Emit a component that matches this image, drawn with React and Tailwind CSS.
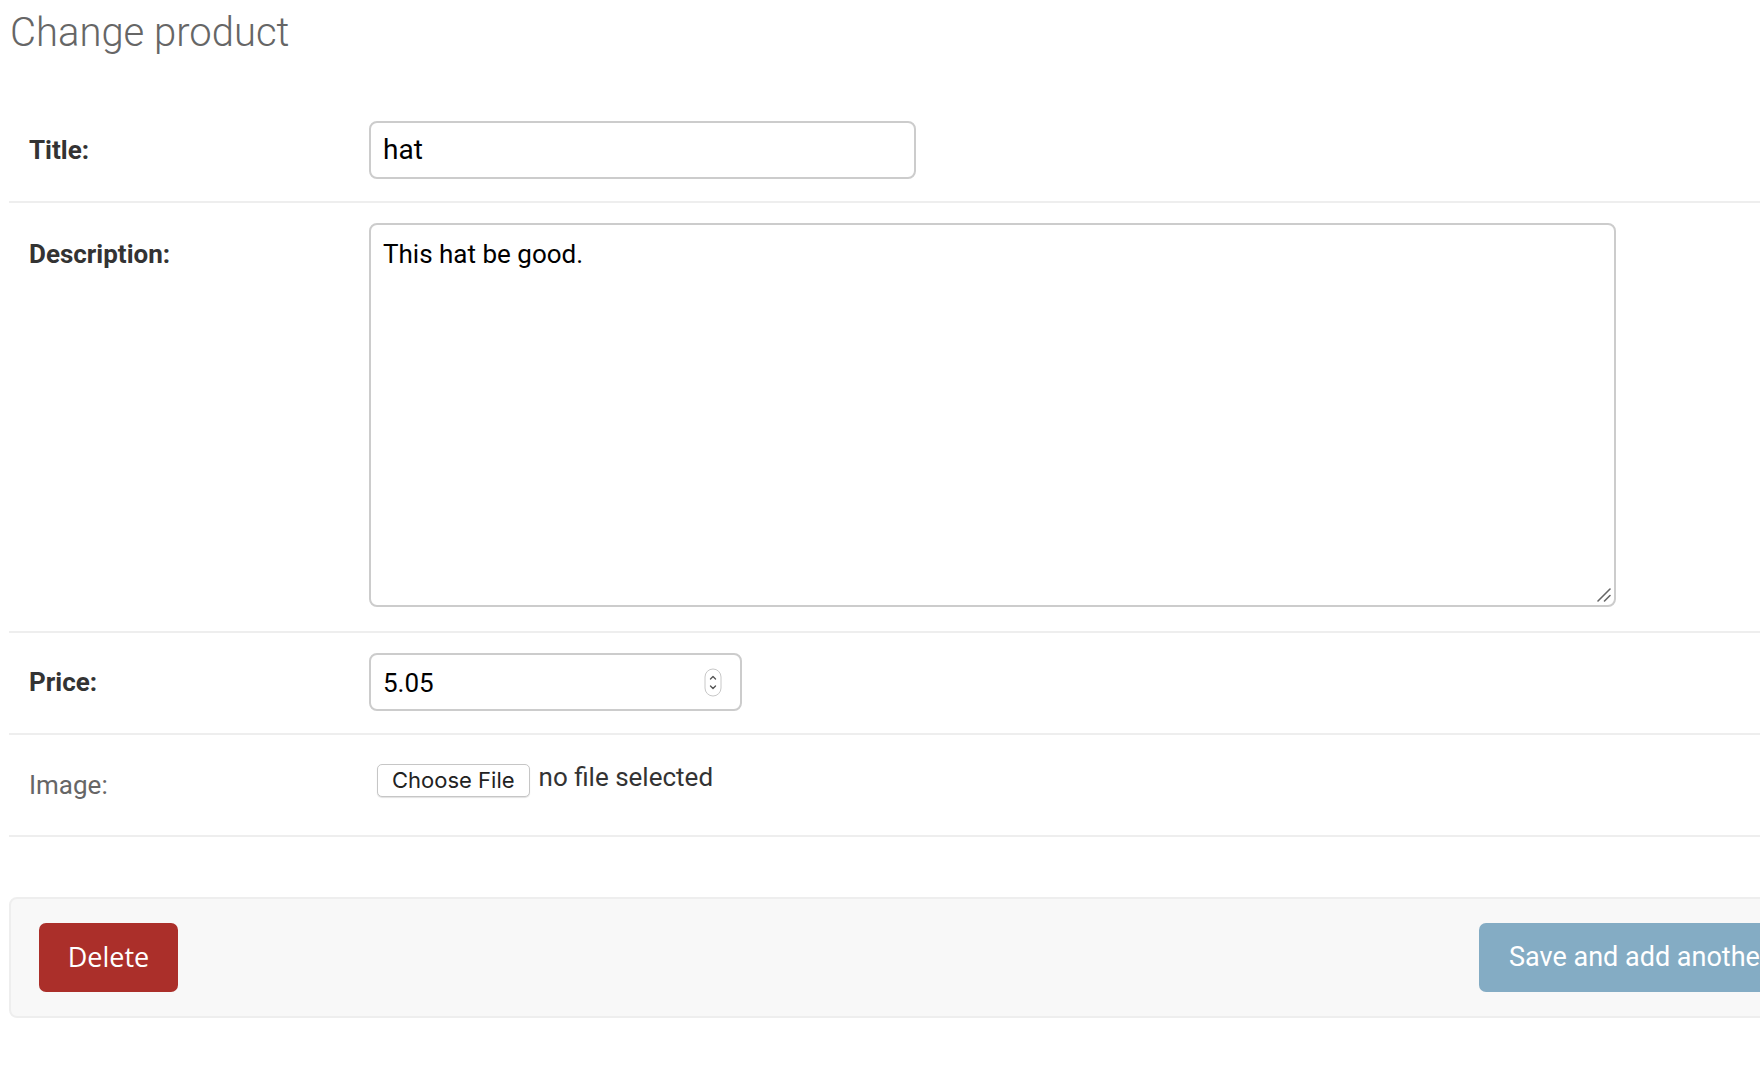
import React from "react";

const labelBold = "w-[340px] shrink-0 pt-[15px] leading-[28px] text-[26px] font-bold text-[#333]";

function Spinner() {
  return (
    <svg width="18" height="29" viewBox="0 0 18 29" className="shrink-0">
      <rect x="1" y="1" width="16" height="27" rx="8" fill="#fff" stroke="#c8c8c8" strokeWidth="1" />
      <path d="M6.5 11 L9 8.5 L11.5 11" fill="none" stroke="#555" strokeWidth="1.4" strokeLinecap="round" strokeLinejoin="round" />
      <path d="M6.5 18 L9 20.5 L11.5 18" fill="none" stroke="#555" strokeWidth="1.4" strokeLinecap="round" strokeLinejoin="round" />
    </svg>
  );
}

function FormRow({ children, bottom = "pb-[22px]" }) {
  return (
    <div className={"flex pl-[20px] pt-[20px] border-b-2 border-[#eee] " + bottom}>{children}</div>
  );
}

export default function App() {
  return (
    <div className="w-[1760px] h-[1088px] overflow-hidden bg-white font-['Roboto',sans-serif]">
      <div className="w-[2400px] pl-[9px]">
        <h1 className="pt-[13px] pl-[1px] text-[40px] leading-[40px] font-light text-[#666]">Change product</h1>

        <div className="mt-[48px]">
          <FormRow>
            <label className={labelBold}>Title:</label>
            <div className="w-[547px] h-[58px] flex items-center px-[12px] border-2 border-[#ccc] rounded-[8px] text-[28px] text-black">
              hat
            </div>
          </FormRow>

          <FormRow bottom="pb-[24px]">
            <label className={labelBold + " pt-[17px]"}>Description:</label>
            <div className="relative w-[1247px] h-[384px] px-[12px] pt-[13px] border-2 border-[#ccc] rounded-[8px] text-[26px] leading-[33px] text-black">
              This hat be good.
              <svg width="16" height="16" viewBox="0 0 16 16" className="absolute right-[2px] bottom-[2px]">
                <path d="M2 14 L14 2" stroke="#666" strokeWidth="1.6" strokeLinecap="round" />
                <path d="M8.5 14 L14 8.5" stroke="#666" strokeWidth="1.6" strokeLinecap="round" />
              </svg>
            </div>
          </FormRow>

          <FormRow>
            <label className={labelBold}>Price:</label>
            <div className="w-[373px] h-[58px] flex items-center justify-between pl-[12px] pr-[18px] border-2 border-[#ccc] rounded-[8px] text-[26px] text-black">
              <span className="pt-[2px]">5.05</span>
              <Spinner />
            </div>
          </FormRow>

          <FormRow>
            <label className="w-[340px] shrink-0 pt-[16px] leading-[28px] text-[26px] font-normal text-[#666]">Image:</label>
            <div className="h-[58px] flex items-start pt-[9px] pl-[8px]">
              <div className="h-[33px] px-[14px] flex items-center bg-white border border-[#c6c6c6] rounded-[5px] shadow-[0_1px_1px_rgba(0,0,0,0.12)] font-['Inter',sans-serif] text-[22px] text-[#222]">
                Choose File
              </div>
              <span className="ml-[9px] mt-[-5px] text-[26px] leading-[36px] text-[#333]">no file selected</span>
            </div>
          </FormRow>
        </div>

        <div className="mt-[60px] h-[121px] flex items-center pl-[28px] bg-[#f8f8f8] border-2 border-[#eee] rounded-[8px]">
          <div className="h-[69px] w-[139px] shrink-0 flex items-center justify-center bg-[#ab2f2a] rounded-[7px] font-['Open_Sans',sans-serif] font-medium text-[27px] text-white">
            Delete
          </div>
          <div className="ml-[1301px] flex shrink-0 gap-[10px]">
            <div className="h-[69px] shrink-0 whitespace-nowrap flex items-center px-[30px] bg-[#84acc4] rounded-[7px] text-[27px] text-white">
              Save and add another
            </div>
            <div className="h-[69px] shrink-0 whitespace-nowrap flex items-center px-[30px] bg-[#84acc4] rounded-[7px] text-[27px] text-white">
              Save and continue editing
            </div>
          </div>
        </div>
      </div>
    </div>
  );
}
